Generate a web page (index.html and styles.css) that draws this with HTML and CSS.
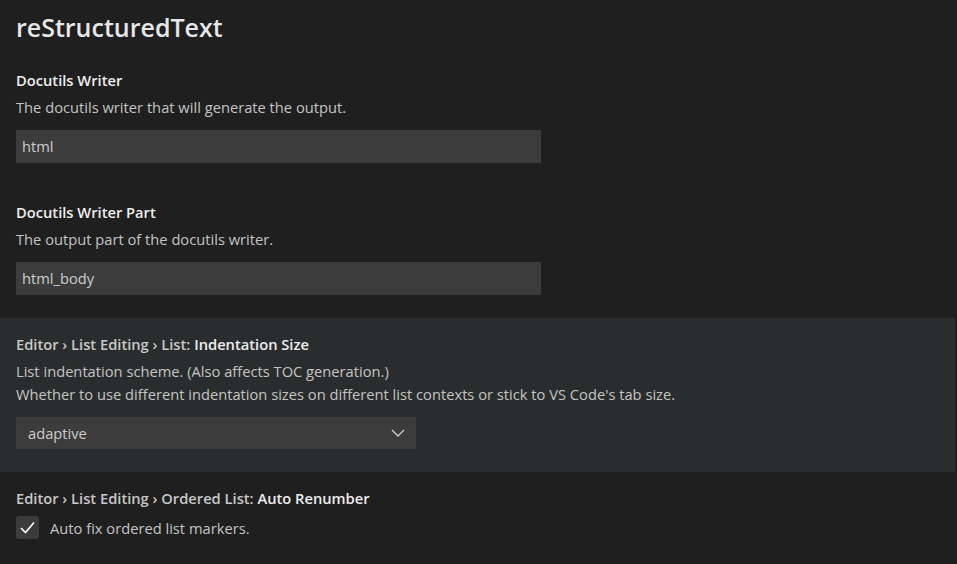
FILE: index.html
```html
<!DOCTYPE html>
<html>
<head>
<meta charset="utf-8">
<link rel="stylesheet" href="styles.css">
</head>
<body>
<div class="settings">
  <h1 class="group-title">reStructuredText</h1>

  <div class="item">
    <div class="item-title"><span class="key">Docutils Writer</span></div>
    <div class="item-desc">The docutils writer that will generate the output.</div>
    <div class="item-value"><div class="textbox">html</div></div>
  </div>

  <div class="item">
    <div class="item-title"><span class="key">Docutils Writer Part</span></div>
    <div class="item-desc">The output part of the docutils writer.</div>
    <div class="item-value"><div class="textbox">html_body</div></div>
  </div>

  <div class="item item-hover">
    <div class="item-title"><span class="category">Editor › List Editing › List: </span><span class="key">Indentation Size</span></div>
    <div class="item-desc">List indentation scheme. (Also affects TOC generation.)</div>
    <div class="item-desc">Whether to use different indentation sizes on different list contexts or stick to VS Code's tab size.</div>
    <div class="item-value">
      <div class="selectbox">
        <span>adaptive</span>
        <svg class="chevron" width="16" height="16" viewBox="0 0 16 16"><path d="M2 5 L8 11 L14 5" fill="none" stroke="#cccccc" stroke-width="1.4"/></svg>
      </div>
    </div>
  </div>

  <div class="item item-bool">
    <div class="item-title"><span class="category">Editor › List Editing › Ordered List: </span><span class="key">Auto Renumber</span></div>
    <div class="bool-row">
      <span class="checkbox"><svg width="23" height="23" viewBox="0 0 23 23"><path d="M5 12 L9.5 16.5 L18 6.5" fill="none" stroke="#ffffff" stroke-width="1.6"/></svg></span>
      <span class="bool-label">Auto fix ordered list markers.</span>
    </div>
  </div>
</div>
</body>
</html>
```

FILE: styles.css
```css
html, body {
  margin: 0;
  padding: 0;
  background: #1f1f1f;
}

body {
  font-family: "Open Sans", "Noto Sans", sans-serif;
  color: #cccccc;
  overflow: hidden;
}

.settings {
  width: 955px;
}

.group-title {
  margin: 0;
  height: 54px;
  line-height: 54px;
  padding-left: 16px;
  font-size: 25px;
  font-weight: 600;
  color: #e7e7e7;
}

.item {
  padding: 14px 16px 23px 16px;
}

.item-hover {
  background: #2a2d2e;
}

.item-title {
  line-height: 24px;
  font-size: 14.7px;
  font-weight: 600;
  color: #e7e7e7;
  white-space: nowrap;
}

.item-title .category {
  color: #c8c8c8;
}

.item-title .key {
  font-weight: 600;
  color: #eeeeee;
}

.item-desc {
  margin-top: 4px;
  line-height: 23px;
  font-size: 14.7px;
  color: #c4c4c4;
  white-space: nowrap;
}

.item-desc + .item-desc {
  margin-top: 0;
}

.item-value {
  margin-top: 11px;
}

.textbox {
  width: 525px;
  height: 33px;
  box-sizing: border-box;
  padding: 0 6px;
  line-height: 33px;
  background: #3c3c3c;
  font-size: 14.7px;
  color: #cccccc;
}

.selectbox {
  width: 400px;
  height: 32px;
  box-sizing: border-box;
  padding: 0 10px 0 12px;
  background: #3c3c3c;
  display: flex;
  align-items: center;
  justify-content: space-between;
  font-size: 14.7px;
  color: #cccccc;
}

.bool-row {
  margin-top: 6px;
  display: flex;
  align-items: center;
  gap: 11px;
}

.checkbox {
  width: 23px;
  height: 23px;
  border-radius: 3px;
  background: #3c3c3c;
  display: flex;
}

.bool-label {
  font-size: 14.7px;
  color: #c4c4c4;
}
```
